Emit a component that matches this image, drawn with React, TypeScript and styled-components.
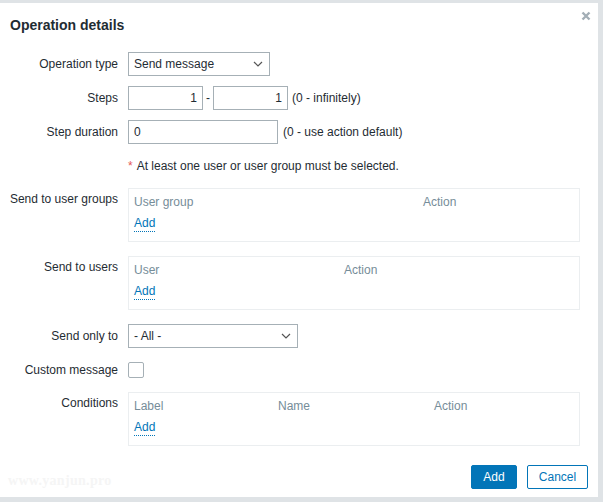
import React from "react";
import styled, { createGlobalStyle } from "styled-components";

const Global = createGlobalStyle`
  html, body { margin: 0; padding: 0; }
  body {
    background: #dfe3e6;
    font-family: Arial, "Liberation Sans", sans-serif;
    font-size: 12px;
    color: #1f2c33;
  }
`;

const Dialog = styled.div`
  position: relative;
  margin-top: 3px;
  width: 598px;
  height: 494px;
  background: #fff;
  box-sizing: border-box;
  padding: 0 10px 0 0;
`;

const Title = styled.h4`
  margin: 0;
  padding: 13px 0 0 10px;
  height: 36px;
  box-sizing: border-box;
  font-size: 14px;
  font-weight: bold;
  line-height: 18px;
  color: #1f2c33;
`;

const Close = styled.button`
  position: absolute;
  top: 6px;
  right: 5px;
  width: 14px;
  height: 14px;
  padding: 0;
  border: 0;
  background: none;
  display: flex;
  align-items: center;
  justify-content: center;
`;

const Form = styled.div`
  display: flex;
  flex-direction: column;
  gap: 10px;
  padding-top: 13px;
`;

const Row = styled.div<{ $extra?: number }>`
  display: grid;
  grid-template-columns: 118px 1fr;
  column-gap: 10px;
  margin-bottom: ${(p) => p.$extra ?? 0}px;
`;

const Label = styled.div<{ $top?: boolean }>`
  text-align: right;
  line-height: 14px;
  align-self: ${(p) => (p.$top ? "start" : "center")};
  padding-top: ${(p) => (p.$top ? "4px" : "0")};
  white-space: nowrap;
`;

const Field = styled.div`
  display: flex;
  align-items: center;
  height: 24px;
  white-space: nowrap;
`;

const SelectBox = styled.div<{ $w: number }>`
  width: ${(p) => p.$w}px;
  height: 24px;
  box-sizing: border-box;
  border: 1px solid #a6b0b6;
  display: flex;
  align-items: center;
  justify-content: space-between;
  padding: 0 6px 0 5px;
  color: #1f2c33;
  font-size: 12px;
`;

const Input = styled.div<{ $w: number; $right?: boolean }>`
  width: ${(p) => p.$w}px;
  height: 24px;
  box-sizing: border-box;
  border: 1px solid #a6b0b6;
  display: flex;
  align-items: center;
  justify-content: ${(p) => (p.$right ? "flex-end" : "flex-start")};
  padding: 0 5px;
`;

const Hint = styled.span<{ $ml: number }>`
  margin-left: ${(p) => p.$ml}px;
`;

const Dash = styled.span`
  margin: 0 3px 0 3px;
`;

const Note = styled.span`
  color: #1f2c33;
`;

const Star = styled.span`
  color: #e45959;
  margin-right: 4px;
`;

const TableBox = styled.div`
  width: 452px;
  height: 54px;
  box-sizing: border-box;
  border: 1px solid #ebeef0;
  padding: 6px 5px 5px;
`;

const Head = styled.div<{ $cols: string }>`
  display: grid;
  grid-template-columns: ${(p) => p.$cols};
  color: #768d99;
  line-height: 15px;
`;

const AddLink = styled.a`
  display: inline-block;
  margin-top: 6px;
  color: #0275b8;
  line-height: 15px;
  text-decoration: none;
  border-bottom: 1px dotted #0275b8;
  cursor: pointer;
`;

const Checkbox = styled.div`
  width: 16px;
  height: 16px;
  box-sizing: border-box;
  border: 1px solid #a6b0b6;
  border-radius: 2px;
`;

const Footer = styled.div`
  display: flex;
  justify-content: flex-end;
  gap: 10px;
  margin-top: 19px;
`;

const Btn = styled.button<{ $primary?: boolean; $w: number }>`
  width: ${(p) => p.$w}px;
  height: 24px;
  box-sizing: border-box;
  border: 1px solid #0275b8;
  border-radius: 2px;
  background: ${(p) => (p.$primary ? "#0275b8" : "#fff")};
  color: ${(p) => (p.$primary ? "#fff" : "#0275b8")};
  font-family: Arial, "Liberation Sans", sans-serif;
  font-size: 12px;
  padding: 0;
`;

const Watermark = styled.div`
  position: absolute;
  left: 8px;
  bottom: 8px;
  font-family: "Liberation Serif", "DejaVu Serif", serif;
  font-weight: bold;
  font-size: 14px;
  color: #f5f5f5;
  letter-spacing: 0.3px;
`;

const Chevron = () => (
  <svg width="10" height="6" viewBox="0 0 10 6">
    <path d="M1 1l4 4 4-4" fill="none" stroke="#555" strokeWidth="1.2" />
  </svg>
);

const X = () => (
  <svg width="10" height="10" viewBox="0 0 10 10">
    <path d="M1.5 1.5l7 7M8.5 1.5l-7 7" stroke="#a3aeb6" strokeWidth="2.4" />
  </svg>
);

export default function App() {
  return (
    <>
      <Global />
      <Dialog>
        <Title>Operation details</Title>
        <Close aria-label="Close">
          <X />
        </Close>
        <Form>
          <Row>
            <Label>Operation type</Label>
            <Field>
              <SelectBox $w={142}>
                <span>Send message</span>
                <Chevron />
              </SelectBox>
            </Field>
          </Row>
          <Row>
            <Label>Steps</Label>
            <Field>
              <Input $w={75} $right>1</Input>
              <Dash>-</Dash>
              <Input $w={75} $right>1</Input>
              <Hint $ml={4}>(0 - infinitely)</Hint>
            </Field>
          </Row>
          <Row>
            <Label>Step duration</Label>
            <Field>
              <Input $w={150}>0</Input>
              <Hint $ml={5}>(0 - use action default)</Hint>
            </Field>
          </Row>
          <Row>
            <div />
            <Field>
              <Note>
                <Star>*</Star>At least one user or user group must be selected.
              </Note>
            </Field>
          </Row>
          <Row $extra={4}>
            <Label $top>Send to user groups</Label>
            <TableBox>
              <Head $cols="289px 1fr">
                <span>User group</span>
                <span>Action</span>
              </Head>
              <AddLink>Add</AddLink>
            </TableBox>
          </Row>
          <Row $extra={4}>
            <Label $top>Send to users</Label>
            <TableBox>
              <Head $cols="210px 1fr">
                <span>User</span>
                <span>Action</span>
              </Head>
              <AddLink>Add</AddLink>
            </TableBox>
          </Row>
          <Row>
            <Label>Send only to</Label>
            <Field>
              <SelectBox $w={170}>
                <span>- All -</span>
                <Chevron />
              </SelectBox>
            </Field>
          </Row>
          <Row>
            <Label>Custom message</Label>
            <Field>
              <Checkbox />
            </Field>
          </Row>
          <Row>
            <Label $top>Conditions</Label>
            <TableBox>
              <Head $cols="144px 156px 1fr">
                <span>Label</span>
                <span>Name</span>
                <span>Action</span>
              </Head>
              <AddLink>Add</AddLink>
            </TableBox>
          </Row>
        </Form>
        <Footer>
          <Btn $primary $w={46}>Add</Btn>
          <Btn $w={61}>Cancel</Btn>
        </Footer>
        <Watermark>www.yanjun.pro</Watermark>
      </Dialog>
    </>
  );
}
